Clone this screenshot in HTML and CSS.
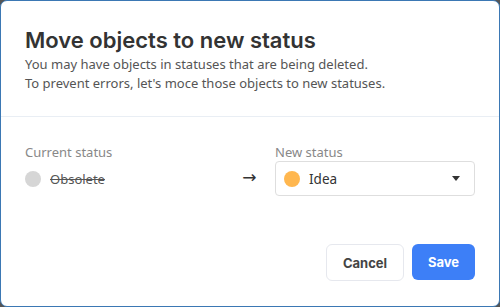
FILE: index.html
```html
<!DOCTYPE html>
<html lang="en">
<head>
    <meta charset="UTF-8">
    <title>Move objects</title>
    <link rel="stylesheet" href="styles.css">
</head>
<body>
    <div class="dialog">
        <div class="dialog-header">
            <h2>Move objects to new status</h2>
            <p>You may have objects in statuses that are being deleted.<br>To prevent errors, let's moce those objects to new statuses.</p>
        </div>

        <div class="dialog-body">
            <div class="status-col">
                <div class="label">Current status</div>
                <div class="status-value">
                    <span class="dot dot-gray"></span>
                    <span class="old-name">Obsolete</span>
                </div>
            </div>
            <div class="arrow">&rarr;</div>
            <div class="status-col">
                <div class="label">New status</div>
                <div class="select">
                    <span class="dot dot-orange"></span>
                    <span class="select-text">Idea</span>
                    <svg class="caret" width="8" height="5" viewBox="0 0 8 5"><path d="M0 0h8L4 5z" fill="#333"/></svg>
                </div>
            </div>
        </div>

        <div class="dialog-footer">
            <button class="button button-light">Cancel</button>
            <button class="button button-primary">Save</button>
        </div>
    </div>
</body>
</html>
```

FILE: styles.css
```css
body {
    margin: 0;
    background-color: #555;
    font-family: 'Noto Sans', sans-serif;
}
.dialog {
    width: 500px;
    height: 307px;
    box-sizing: border-box;
    border: 1px solid #3b78b4;
    border-radius: 7px;
    background-color: #fff;
    display: flex;
    flex-direction: column;
}
.dialog-header {
    padding: 24px 24px 0;
    height: 91px;
    border-bottom: 1px solid #e9eef4;
}
.dialog-header h2 {
    margin: 0;
    font-family: 'Inter', sans-serif;
    font-weight: 600;
    font-size: 22px;
    line-height: 30px;
    color: #333;
}
.dialog-header p {
    margin: 0;
    font-size: 13px;
    line-height: 19px;
    color: #555;
}
.dialog-body {
    display: flex;
    align-items: flex-end;
    padding: 26px 24px 0;
}
.status-col {
    display: flex;
    flex-direction: column;
}
.status-col:first-child {
    width: 218px;
}
.label {
    font-size: 13px;
    line-height: 18px;
    color: #888;
}
.status-value {
    display: flex;
    align-items: center;
    height: 35px;
}
.dot {
    display: inline-block;
    width: 16px;
    height: 16px;
    border-radius: 50%;
}
.dot-gray {
    background-color: #d6d6d6;
}
.dot-orange {
    background-color: #ffb74f;
}
.old-name {
    margin-left: 9px;
    font-size: 13px;
    color: #555;
    text-decoration: line-through;
}
.arrow {
    width: 33px;
    height: 35px;
    line-height: 33px;
    font-family: 'DejaVu Sans', sans-serif;
    font-size: 17px;
    color: #333;
}
.select {
    display: flex;
    align-items: center;
    width: 200px;
    height: 35px;
    box-sizing: border-box;
    border: 1px solid #dedede;
    border-radius: 4px;
    padding: 0 14px 0 8px;
}
.select-text {
    flex: 1;
    margin-left: 9px;
    font-size: 13.5px;
    color: #333;
}
.dialog-footer {
    display: flex;
    justify-content: flex-end;
    gap: 8px;
    padding: 0 24px;
    margin-top: 48px;
}
.button {
    height: 37px;
    border-radius: 6px;
    font-family: 'Inter', sans-serif;
    font-weight: 700;
    font-size: 13px;
    cursor: pointer;
}
.button-light {
    width: 78px;
    background-color: #fff;
    border: 1px solid #e6e8ee;
    color: #444;
}
.button-primary {
    width: 63px;
    height: 36px;
    background-color: #3d7ff7;
    border: none;
    color: #fff;
}
```
